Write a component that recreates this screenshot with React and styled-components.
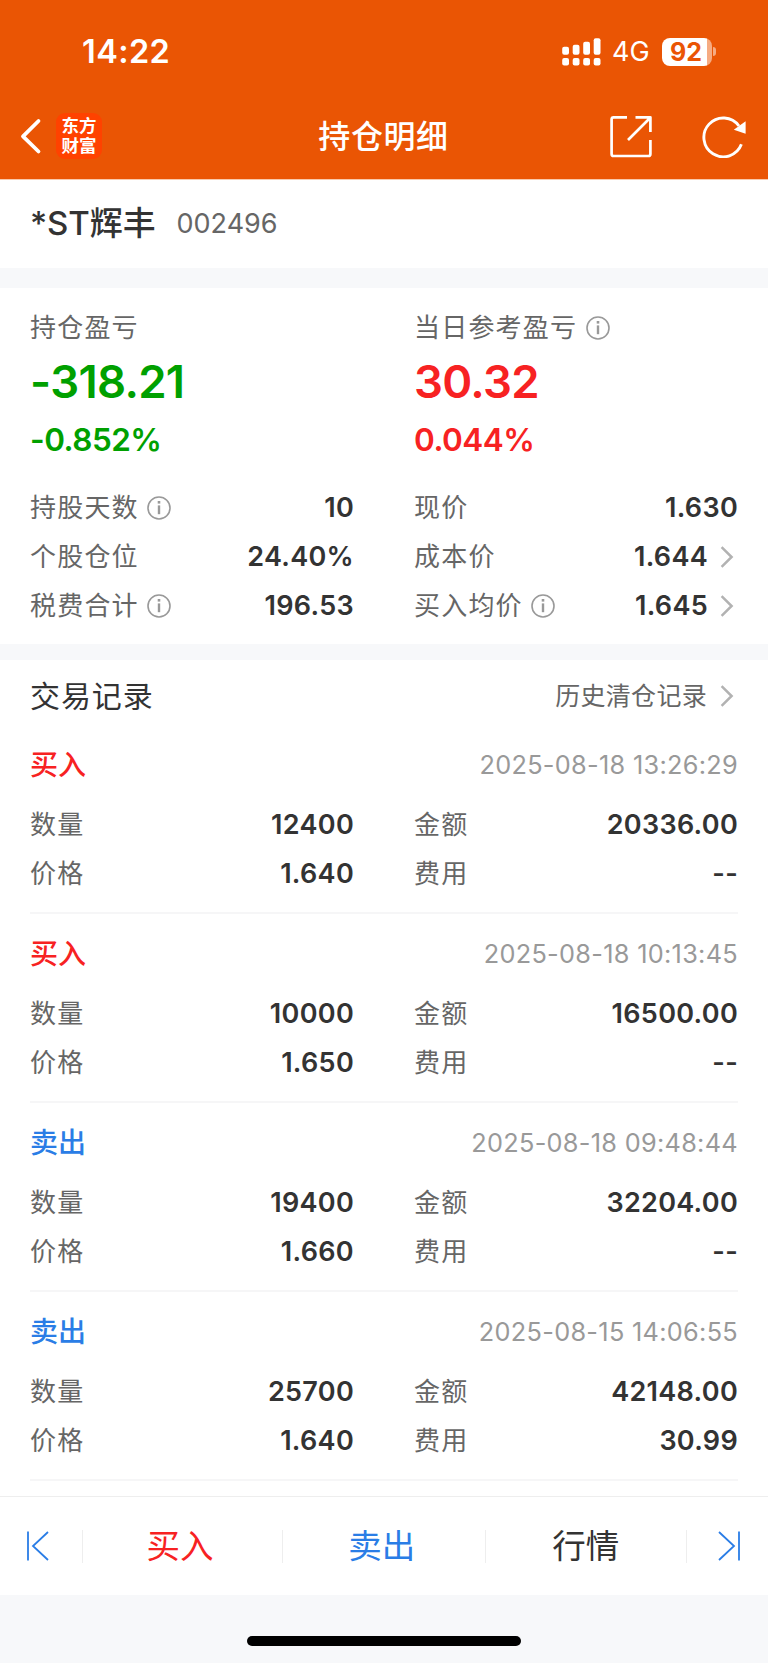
import React from 'react';
import styled, { createGlobalStyle } from 'styled-components';

const trades = [
  { side: 'buy', time: '2025-08-18 13:26:29', count: '12400', amount: '20336.00', price: '1.640', fee: '--' },
  { side: 'buy', time: '2025-08-18 10:13:45', count: '10000', amount: '16500.00', price: '1.650', fee: '--' },
  { side: 'sell', time: '2025-08-18 09:48:44', count: '19400', amount: '32204.00', price: '1.660', fee: '--' },
  { side: 'sell', time: '2025-08-15 14:06:55', count: '25700', amount: '42148.00', price: '1.640', fee: '30.99' },
];

const stats = [
  { label: '持股天数', info: true, value: '10' },
  { label: '现价', value: '1.630' },
  { label: '个股仓位', value: '24.40%' },
  { label: '成本价', value: '1.644', link: true },
  { label: '税费合计', info: true, value: '196.53' },
  { label: '买入均价', info: true, value: '1.645', link: true },
];

function InfoIcon() {
  return (
    <Info viewBox="0 0 24 24" fill="none" stroke="#999">
      <circle cx="12" cy="12" r="11" strokeWidth="1.6" />
      <path d="M12 9.4v8.8" strokeWidth="2.4" />
      <path d="M12 5v2.6" strokeWidth="2.6" />
    </Info>
  )
}

function Chevron() {
  return (
    <Arrow viewBox="0 0 14 22" fill="none" stroke="#b2b2b2" strokeWidth="2.5">
      <path d="M1.6 1.2 11.6 11 1.6 20.8" />
    </Arrow>
  )
}

function Signal() {
  const heights = [8, 10, 13, 16.5];
  return (
    <svg width="40" height="28" viewBox="0 0 40 28" fill="#fff">
      {heights.map((h, i) => (
        <g key={i}>
          <rect x={0.2 + i * 10.5} y={16.8 - h} width="6.8" height={h} rx="2" />
          <rect x={0.2 + i * 10.5} y="20" width="6.8" height="7.6" rx="2" />
        </g>
      ))}
    </svg>
  )
}

function Field({ label, value, info, link }) {
  return (
    <Row>
      <Label>{label}{info && <InfoIcon />}</Label>
      <Value>{value}{link && <Chevron />}</Value>
    </Row>
  )
}

function Trade({ trade }) {
  return (
    <TradeItem>
      <Row>
        <Side $side={trade.side}>{trade.side === 'buy' ? '买入' : '卖出'}</Side>
        <Time>{trade.time}</Time>
      </Row>
      <TradeGrid>
        <Field label="数量" value={trade.count} />
        <Field label="金额" value={trade.amount} />
        <Field label="价格" value={trade.price} />
        <Field label="费用" value={trade.fee} />
      </TradeGrid>
    </TradeItem>
  )
}

export default function App() {
  return (
    <Page>
      <GlobalStyle />
      <StatusBar>
        <Clock>14:22</Clock>
        <Signal />
        <Network>4G</Network>
        <Battery>
          <BatteryBody>92</BatteryBody>
          <BatteryTip />
        </Battery>
      </StatusBar>

      <NavBar>
        <NavSide>
          <svg width="24" height="38" viewBox="0 0 24 38" fill="none" stroke="#fff" strokeWidth="3.8" strokeLinecap="round" strokeLinejoin="round">
            <path d="M20.5 4 5 19.3 20.5 34.5" />
          </svg>
          <Logo>
            <span>东方</span>
            <span>财富</span>
          </Logo>
        </NavSide>
        <Title>持仓明细</Title>
        <NavSide $end>
          <svg width="44" height="44" viewBox="0 0 44 44" fill="none" stroke="#fff" strokeWidth="2.7" strokeLinejoin="round">
            <path d="M18 3.3H4.6a2 2 0 0 0-2 2V40a2 2 0 0 0 2 2h34.8a2 2 0 0 0 2-2V26M26.5 3.3H41.4V18M41 4 19 26" />
          </svg>
          <svg width="46" height="44" viewBox="0 0 46 44" fill="none" stroke="#fff" strokeWidth="2.9">
            <path d="M40.4 30.3A19.4 19.4 0 1 1 38 12" />
            <path d="M44.6 7.2V19.8L32.8 15.8Z" fill="#fff" stroke="none" />
          </svg>
        </NavSide>
      </NavBar>

      <Stock>
        <StockName>*ST辉丰</StockName>
        <StockCode>002496</StockCode>
      </Stock>

      <Summary>
        <Columns>
          <div>
            <Row><Label>持仓盈亏</Label></Row>
            <Profit $color="#00a000">-318.21</Profit>
            <Percent $color="#00a000">-0.852%</Percent>
          </div>
          <div>
            <Row><Label>当日参考盈亏<InfoIcon /></Label></Row>
            <Profit $color="#f72222">30.32</Profit>
            <Percent $color="#f72222">0.044%</Percent>
          </div>
        </Columns>
        <Columns>
          {stats.map((item) => <Field key={item.label} {...item} />)}
        </Columns>
      </Summary>

      <Records>
        <RecordsHead>
          <h2>交易记录</h2>
          <History>历史清仓记录<Chevron /></History>
        </RecordsHead>
        {trades.map((trade) => <Trade key={trade.time} trade={trade} />)}
      </Records>

      <Toolbar>
        <Edge>
          <svg width="24" height="30" viewBox="0 0 24 30" fill="none" stroke="#2a7de6" strokeWidth="1.8">
            <path d="M2 .5v29M22 1 7 15l15 14" />
          </svg>
        </Edge>
        <Tab $color="#f72222">买入</Tab>
        <Tab $color="#2a7de6">卖出</Tab>
        <Tab $color="#333">行情</Tab>
        <Edge>
          <svg width="24" height="30" viewBox="0 0 24 30" fill="none" stroke="#2a7de6" strokeWidth="1.8">
            <path d="M22 .5v29M2 1l15 14L2 29" />
          </svg>
        </Edge>
      </Toolbar>
      <HomeArea><HomeBar /></HomeArea>
    </Page>
  )
}

const GlobalStyle = createGlobalStyle`
  * {
    box-sizing: border-box;
  }
  body {
    margin: 0;
    background: #f7f8fa;
    font-family: Inter, "Noto Sans CJK SC", sans-serif;
    color: #333;
  }
  svg {
    display: block;
    flex: none;
  }
`;

const Page = styled.div`
  width: 768px;
  height: 1663px;
  overflow: hidden;
  display: flex;
  flex-direction: column;
  background: #f7f8fa;
`;

const StatusBar = styled.div`
  height: 94px;
  padding: 9px 52px 0 82px;
  display: flex;
  align-items: center;
  background: #ea5504;
  color: #fff;
`;

const Clock = styled.div`
  margin-right: auto;
  font-size: 32.5px;
  font-weight: 600;
  line-height: 40px;
  letter-spacing: 0.4px;
`;

const Network = styled.div`
  width: 38px;
  margin: 0 12px 0 10px;
  font-size: 27px;
  line-height: 34px;
  white-space: nowrap;
`;

const Battery = styled.div`
  display: flex;
  align-items: center;
  gap: 1px;
`;

const BatteryBody = styled.div`
  width: 50px;
  height: 28px;
  padding-right: 2px;
  border-radius: 8px;
  background: linear-gradient(90deg, #fff 45px, #f6ab82 45px);
  color: #ea5504;
  font-size: 25px;
  font-weight: 700;
  line-height: 28px;
  text-align: center;
`;

const BatteryTip = styled.div`
  width: 3px;
  height: 9px;
  border-radius: 0 4px 4px 0;
  background: #f6ab82;
`;

const NavBar = styled.div`
  height: 86px;
  padding: 0 21px 1px 18px;
  display: flex;
  align-items: center;
  justify-content: space-between;
  background: #ea5504;
  border-bottom: 1px solid #f9c9ac;
`;

const NavSide = styled.div`
  width: 210px;
  display: flex;
  align-items: center;
  justify-content: ${({ $end }) => ($end ? 'flex-end' : 'flex-start')};
  gap: ${({ $end }) => ($end ? '48px' : '14px')};
`;

const Logo = styled.div`
  width: 46px;
  height: 46px;
  border-radius: 9px;
  display: flex;
  flex-direction: column;
  align-items: center;
  justify-content: center;
  background: #ff4200;
  color: #fff;
  font-size: 17.5px;
  font-weight: 700;
  line-height: 19.5px;
  padding-bottom: 1px;
`;

const Title = styled.h1`
  margin: 0;
  padding: 2px 0 0 2px;
  color: #fff;
  font-size: 32px;
  font-weight: 500;
  line-height: 48px;
  letter-spacing: 0.6px;
`;

const Stock = styled.div`
  height: 88px;
  padding: 0 30px;
  display: flex;
  align-items: center;
  gap: 21px;
  background: #fff;
`;

const StockName = styled.div`
  padding-bottom: 2px;
  font-size: 33px;
  font-weight: 500;
  line-height: 86px;
  letter-spacing: -0.1px;
`;

const StockCode = styled.div`
  color: #666;
  font-size: 27px;
  line-height: 88px;
`;

const Summary = styled.section`
  height: 356px;
  margin: 20px 0 16px;
  padding: 15px 0 14px;
  display: flex;
  flex-direction: column;
  justify-content: space-between;
  background: #fff;
`;

const Columns = styled.div`
  padding: 0 30px;
  display: grid;
  grid-template-columns: 1fr 1fr;
  column-gap: 60px;
`;

const Row = styled.div`
  height: 49px;
  display: flex;
  align-items: center;
  justify-content: space-between;
`;

const Label = styled.div`
  display: flex;
  align-items: center;
  color: #666;
  font-size: 26px;
  letter-spacing: 1.2px;
  line-height: 49px;
`;

const Info = styled.svg`
  width: 24px;
  height: 24px;
  margin: 0 0 0 8.5px;
`;

const Arrow = styled.svg`
  width: 14px;
  height: 22px;
  margin: 0 4px 0 12px;
`;

const Value = styled.div`
  display: flex;
  align-items: center;
  font-size: 27px;
  font-weight: 600;
  line-height: 49px;
  letter-spacing: 0.3px;
`;

const Profit = styled.div`
  color: ${({ $color }) => $color};
  font-size: 45.5px;
  font-weight: 600;
  line-height: 60px;
  letter-spacing: -0.7px;
`;

const Percent = styled.div`
  color: ${({ $color }) => $color};
  font-size: 31.5px;
  font-weight: 600;
  line-height: 56px;
  letter-spacing: -0.5px;
`;

const Records = styled.section`
  height: 836px;
  background: #fff;
`;

const RecordsHead = styled.div`
  height: 65px;
  padding: 6px 30px 0;
  display: flex;
  align-items: center;
  justify-content: space-between;
  h2 {
    margin: 0;
    font-size: 30px;
    font-weight: 400;
    line-height: 58px;
    letter-spacing: 0.9px;
  }
`;

const History = styled.div`
  display: flex;
  align-items: center;
  color: #666;
  font-size: 25px;
  line-height: 60px;
  letter-spacing: 0.3px;
  svg {
    margin-left: 13px;
  }
`;

const TradeItem = styled.div`
  height: 189px;
  margin: 0 30px;
  padding-top: 16px;
  border-bottom: 2px solid #f6f6f7;
`;

const Side = styled.div`
  color: ${({ $side }) => ($side === 'buy' ? '#f72222' : '#2a7de6')};
  font-size: 28px;
  font-weight: 500;
  line-height: 49px;
`;

const Time = styled.div`
  padding-bottom: 2px;
  color: #999;
  font-size: 25.3px;
  line-height: 47px;
  letter-spacing: 0.3px;
`;

const TradeGrid = styled.div`
  margin-top: 10px;
  display: grid;
  grid-template-columns: 1fr 1fr;
  column-gap: 60px;
`;

const Toolbar = styled.nav`
  height: 99px;
  display: flex;
  align-items: center;
  background: #fff;
  border-top: 1px solid #eee;
`;

const Edge = styled.div`
  width: 82px;
  display: flex;
  justify-content: center;
  padding-right: 6px;
  &:last-child {
    width: 81px;
    padding: 0 0 0 2px;
  }
`;

const Tab = styled.div`
  flex: 1 0 202px;
  height: 33px;
  padding-right: 4px;
  display: flex;
  align-items: center;
  justify-content: center;
  border-left: 1px solid #eee;
  color: ${({ $color }) => $color};
  font-size: 33.5px;
  line-height: 33px;
  &:nth-child(2) {
    flex: 0 0 200px;
    padding-right: 5px;
  }
  &:nth-last-child(2) {
    padding: 0;
    border-right: 1px solid #eee;
  }
`;

const HomeArea = styled.div`
  flex: 1;
  display: flex;
  justify-content: center;
  padding-top: 41px;
`;

const HomeBar = styled.div`
  width: 274px;
  height: 10px;
  border-radius: 5px;
  background: #000;
`;
